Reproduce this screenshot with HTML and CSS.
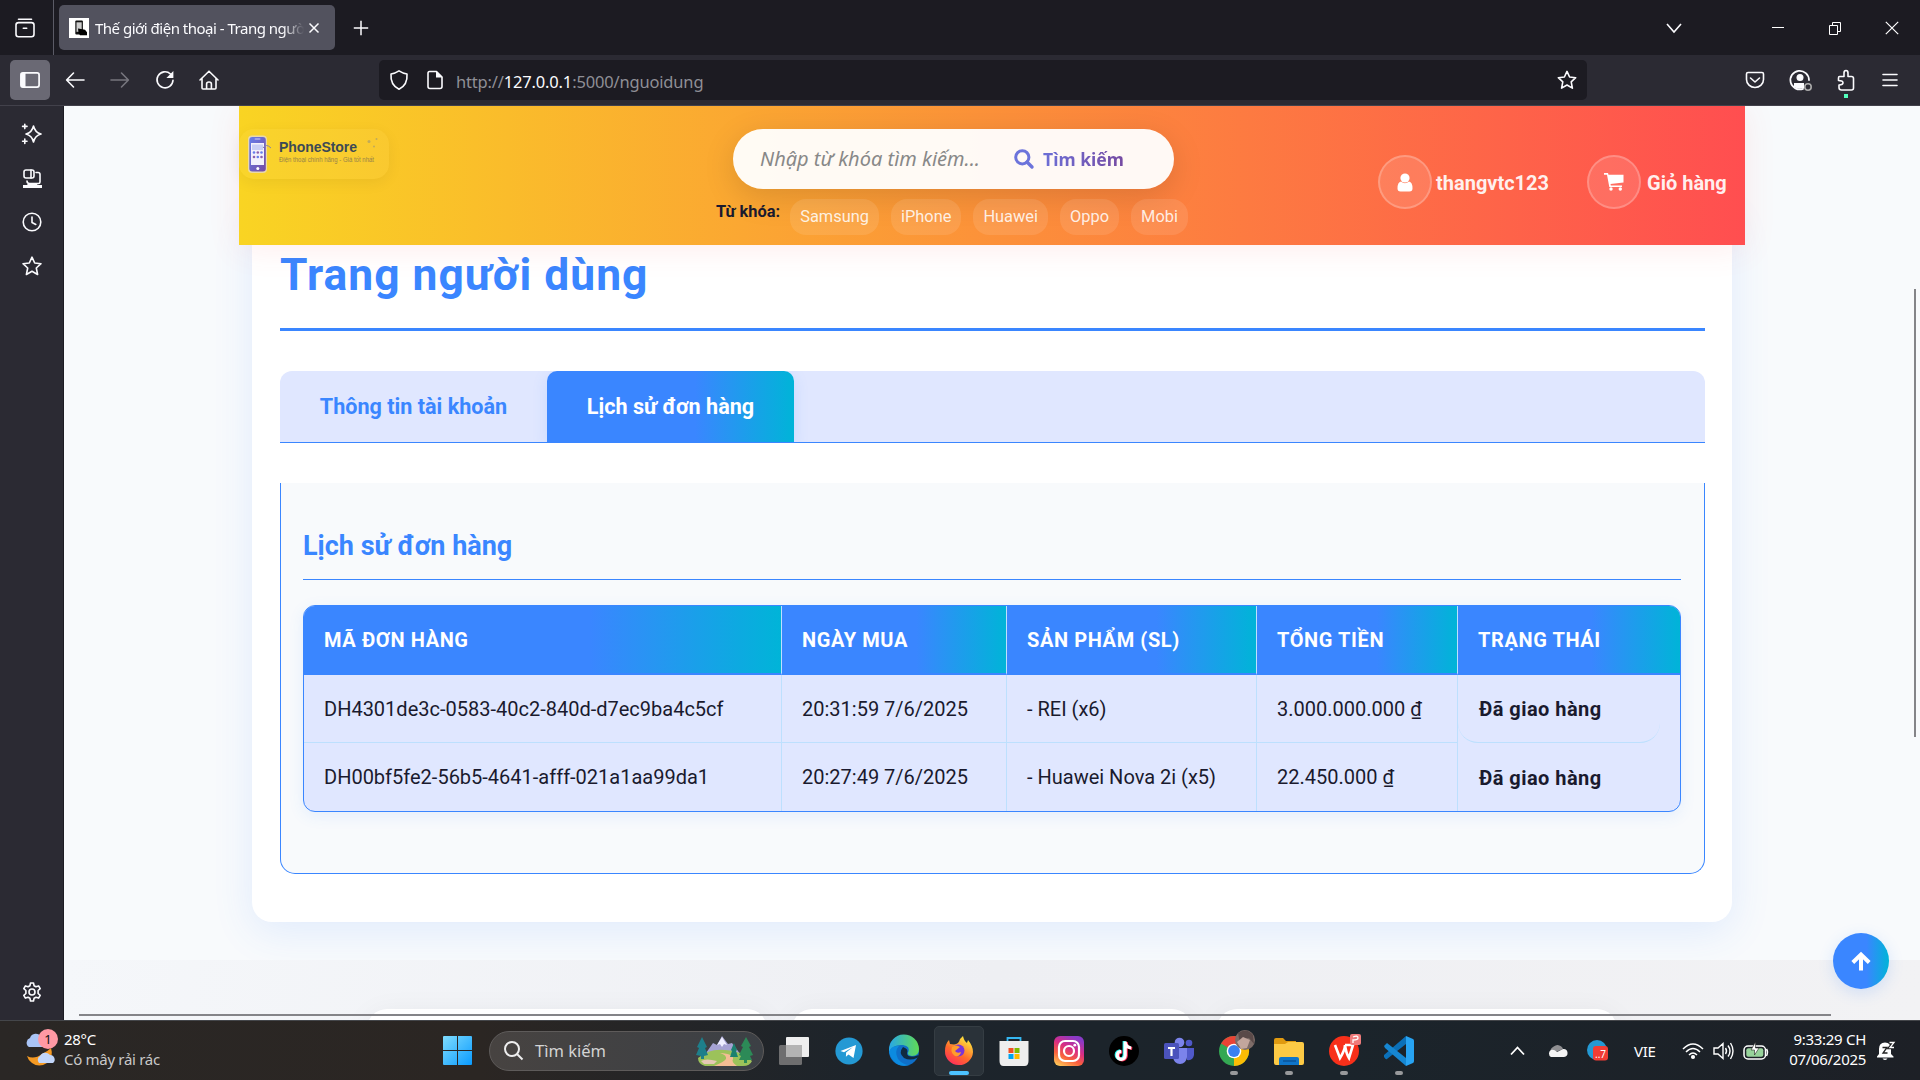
FILE: index.html
```html
<!DOCTYPE html>
<html lang="vi">
<head>
<meta charset="utf-8">
<title>Thế giới điện thoại - Trang người dùng</title>
<link rel="stylesheet" href="styles.css">
</head>
<body>
<div class="tabstrip">
  <svg class="ts-view" width="20" height="20" viewBox="0 0 20 20" fill="none" stroke="#fbfbfe" stroke-width="1.6" stroke-linecap="round"><path d="M3.5 1.2h13"/><rect x="1" y="4.6" width="18" height="14.2" rx="2.5"/><path d="M8.3 10.2h3.4"/></svg>
  <span class="ts-sep"></span>
  <div class="tab">
    <svg width="20" height="20" viewBox="0 0 20 20"><rect width="20" height="20" fill="#fff"/><rect x="6.3" y="2.6" width="7.6" height="14" rx="1" fill="#111"/><rect x="7.5" y="4.3" width="5.2" height="9.5" fill="#ccc"/><path d="M9 10.5l3 .6 4 .6 2 2.600v3h-7l-1.500-2.500z" fill="#000"/></svg>
    <span class="tab-title">Thế giới điện thoại - Trang người dùng</span>
    <svg class="tab-x" width="12" height="12" viewBox="0 0 12 12" stroke="#fbfbfe" stroke-width="1.5"><path d="M1.500 1.500l9 9M10.500 1.500l-9 9"/></svg>
  </div>
  <svg class="plus" width="16" height="16" viewBox="0 0 16 16" stroke="#fbfbfe" stroke-width="1.5"><path d="M8 .8v14.400M.8 8h14.400"/></svg>
  <svg class="win-chev" width="16" height="12" viewBox="0 0 16 12" fill="none" stroke="#fbfbfe" stroke-width="1.6"><path d="M1 2l7 8 7-8"/></svg>
  <svg class="win-min" width="12" height="12" viewBox="0 0 12 12" fill="#fff"><path d="M0 5h12v1H0z"/></svg>
  <svg class="win-max" width="14" height="14" viewBox="0 0 14 14" fill="none" stroke="#fff"><path d="M1.500 4.500h8v9h-8zM4.500 4.500v-3h8v9h-3"/></svg>
  <svg class="win-x" width="14" height="14" viewBox="0 0 14 14" stroke="#fff" stroke-width="1.2"><path d="M.8.8l12.400 12.400M13.200.8L.8 13.200"/></svg>
</div>
<div class="toolbar">
  <div class="side-btn"><svg width="20" height="16" viewBox="0 0 20 16"><rect x=".9" y=".9" width="18.200" height="14.200" rx="2" fill="none" stroke="#fbfbfe" stroke-width="1.700"/><path d="M1 1h4.500v14H1z" fill="#fbfbfe"/></svg></div>
  <svg class="nav back" width="20" height="20" viewBox="0 0 20 20"><path d="M19 10H2M8.500 3L1.600 10l6.900 7"/></svg>
  <svg class="nav fwd" width="20" height="20" viewBox="0 0 20 20"><path d="M1 10h17M11.500 3l6.900 7-6.900 7"/></svg>
  <svg class="nav" width="20" height="20" viewBox="0 0 20 20"><path d="M18 10.200A8 8 0 1 1 15.500 4"/><path d="M18.400 1v7h-7z" fill="#fbfbfe" stroke="none"/></svg>
  <svg class="nav home" width="20" height="20" viewBox="0 0 20 20"><path d="M1 10L10 1.200 19 10M3 8.500V18q0 1 1 1h12q1 0 1-1V8.500M7.600 19v-5q0-2 2.400-2t2.400 2v5"/></svg>
  <div class="urlbar">
    <svg class="nav" width="20" height="20" viewBox="0 0 20 20"><path d="M10 .9q4 2.600 8 3.100 .8 11-8 15.200Q1.200 15 2 4q4-.5 8-3.100z"/></svg>
    <svg class="nav doc" width="18" height="20" viewBox="0 0 18 20"><path d="M3.500 1.500h7L16 7v9.500q0 2-2 2H4q-2 0-2-2v-13q0-2 1.500-2z"/><path d="M10 1l6.500 6.500H10z" fill="#fbfbfe" stroke="none"/></svg>
    <span class="url">http://<b>127.0.0.1</b>:5000/nguoidung</span>
    <svg class="nav" width="20" height="20" viewBox="0 0 20 20"><path d="M10 1.400l2.600 5.600 6.100.7-4.500 4.200 1.200 6.200L10 15l-5.400 3.100 1.200-6.200L1.300 7.700 7.400 7z"/></svg>
  </div>
  <svg class="nav pocket" width="20" height="18" viewBox="0 0 20 18"><path d="M3 1.500h14q1.500 0 1.500 1.500v5.500a8.500 8 0 0 1-17 0V3q0-1.500 1.500-1.500zM5.500 7l4.500 4 4.500-4"/></svg>
  <svg class="nav acct" width="24" height="22" viewBox="0 0 24 22"><path d="M14 19.800A9.300 9.300 0 1 1 20 11" stroke-width="1.800"/><circle cx="11" cy="8.500" r="3.500" fill="#fbfbfe" stroke="none"/><path d="M5 14h10v5q-6 2-10-1z" fill="#fbfbfe" stroke="none"/><circle cx="19" cy="18" r="3.200" stroke="#aaa"/></svg>
  <svg class="nav ext" width="20" height="31" viewBox="0 0 20 31"><path d="M3.500 7.500H8V4q0-2.500 2-2.500T12 4v3.500h3.500q2 0 2 2V19q0 2-2 2h-10q-2.500 0-2.500-2.500V16q4 0 4-2.200T2.500 11.500V9q0-1.500 1-1.500z"/><path d="M8 25h4v4H8z" fill="#54ffbd" stroke="none"/></svg>
  <svg class="nav" width="16" height="14" viewBox="0 0 16 14"><path d="M1 1.500h14M1 7h14M1 12.500h14"/></svg>
</div>
<div class="middle">
  <div class="sidebar">
    <svg class="nav" width="20" height="20" viewBox="0 0 20 20"><path d="M11.500 2q1.500 6.500 7.500 8-6 1.500-7.500 8Q10 11.500 4 10q6-1.500 7.500-8zM2.800.2v4.400M.6 2.400H5M2.800 15v4.400M.6 17.200H5"/></svg>
    <svg class="nav" width="20" height="20" viewBox="0 -1 20 20"><rect x="2" y="1" width="10" height="8" rx="2"/><path d="M9 1v8M14 3.500h2q2 0 2 2V13q0 1.500-1.500 1.500h-9Q5 14.500 5 12"/><path d="M1 16h4l1.500-2h8l1 2H20v3H1z" fill="#fbfbfe" stroke="none"/></svg>
    <svg class="nav" width="20" height="20" viewBox="0 0 20 20"><circle cx="10" cy="10" r="8.800"/><path d="M10 5v5.500l3.800 2"/></svg>
    <svg class="nav" width="20" height="20" viewBox="0 0 20 20"><path d="M10 1.200l2.700 5.800 6.300.7-4.700 4.300 1.300 6.500L10 15.300l-5.600 3.200L5.700 12 1 7.700 7.300 7z"/></svg>
    <svg class="nav gear" width="20" height="20" viewBox="0 0 20 20"><circle cx="10" cy="10" r="3"/><path d="M8.500 1h3l.6 2.800 1.800 1 2.700-.9 1.600 2.700-2.100 1.900v3l2.100 1.900-1.600 2.700-2.700-.9-1.800 1-.6 2.800h-3l-.6-2.800-1.800-1-2.700.9-1.600-2.700 2.100-1.900v-3L1.800 6.600l1.600-2.700 2.700.9 1.800-1z"/></svg>
  </div>
  <div class="page">
    <header class="site-head">
      <svg class="logo" width="150" height="50" viewBox="0 0 150 50">
        <defs><linearGradient id="ph" x1="0" y1="0" x2="1" y2="1"><stop offset="0" stop-color="#667eea"/><stop offset="1" stop-color="#764ba2"/></linearGradient></defs>
        <rect x="9" y="6.500" width="19" height="37.500" rx="4" fill="#ead9a8"/><rect x="10.300" y="8" width="16.500" height="34.500" rx="3" fill="url(#ph)"/><rect x="12" y="14" width="13" height="22" fill="#f3f1fb"/><rect x="13" y="15.500" width="11" height="5.500" fill="#c9cff5"/><rect x="15.500" y="9" width="6" height="2" rx="1" fill="#9fa0e6"/>
        <g fill="#667eea"><circle cx="15" cy="23.500" r="1.300"/><circle cx="22.500" cy="23.500" r="1.300"/><circle cx="18.800" cy="28" r="1.300"/></g><g fill="#8f62ad"><circle cx="18.800" cy="23.500" r="1.300"/><circle cx="15" cy="28" r="1.300"/><circle cx="22.500" cy="28" r="1.300"/></g><circle cx="18.800" cy="39.500" r="1.500" fill="#fff"/>
        <path d="M24 19q3-5 8 0" fill="none" stroke="#8582a8"/><g fill="#9a9577" opacity=".6"><circle cx="130" cy="12.500" r="1.500"/><circle cx="137.500" cy="10" r="1"/><circle cx="135" cy="17.500" r="1"/></g>
        <text x="40" y="23.300" class="logo-name" textLength="78">PhoneStore</text><text x="40" y="33" class="logo-sub" textLength="95" lengthAdjust="spacingAndGlyphs">Điện thoại chính hãng - Giá tốt nhất</text>
      </svg>
      <div class="search-col">
        <div class="search">
          <span class="ph">Nhập từ khóa tìm kiếm...</span>
          <svg width="20" height="20" viewBox="0 0 20 20" fill="none" stroke="#6c74db" stroke-width="3"><circle cx="8.300" cy="8.300" r="6.600"/><path d="M13 13l5 5" stroke-width="3.400" stroke-linecap="round"/></svg>
          <span class="go">Tìm kiếm</span>
        </div>
        <div class="keys"><b>Từ khóa:</b><span>Samsung</span><span>iPhone</span><span>Huawei</span><span>Oppo</span><span>Mobi</span></div>
      </div>
      <div class="member">
        <i><svg width="16" height="19" viewBox="0 0 16 19" fill="#fff"><circle cx="8" cy="5" r="4.600"/><path d="M4 8.500Q8 12 12 8.500q3.500.5 3.500 7 0 3-3 3h-9q-3 0-3-3 0-6.500 3.500-7z"/></svg></i>
        <span class="m1">thangvtc123</span>
        <i><svg width="20" height="18" viewBox="0 0 20 18" fill="#fff"><path d="M0 0h4l.5 1.800h15V9.500L6.500 11l.4 1.500H18V14H5.300L3 1.700H0z"/><circle cx="7" cy="16" r="1.700"/><circle cx="16.300" cy="16" r="1.700"/></svg></i>
        <span class="m2">Giỏ hàng</span>
      </div>
    </header>
    <main class="card">
      <h1><span>Trang người dùng</span></h1>
      <div class="tabs"><div class="t1">Thông tin tài khoản</div><div class="t2">Lịch sử đơn hàng</div></div>
      <section class="panel">
        <h2>Lịch sử đơn hàng</h2>
        <div class="orders">
          <div class="row head"><div>MÃ ĐƠN HÀNG</div><div>NGÀY MUA</div><div>SẢN PHẨM (SL)</div><div>TỔNG TIỀN</div><div>TRẠNG THÁI</div></div>
          <div class="row r1"><div>DH4301de3c-0583-40c2-840d-d7ec9ba4c5cf</div><div>20:31:59 7/6/2025</div><div>- REI (x6)</div><div>3.000.000.000 ₫</div><div class="st">Đã giao hàng</div></div>
          <div class="row r2"><div>DH00bf5fe2-56b5-4641-afff-021a1aa99da1</div><div>20:27:49 7/6/2025</div><div>- Huawei Nova 2i (x5)</div><div>22.450.000 ₫</div><div class="st">Đã giao hàng</div></div>
        </div>
      </section>
    </main>
    <footer class="foot"><div></div><div></div><div></div></footer>
    <div class="vbar"></div><div class="hbar"></div>
    <div class="totop"><svg width="20" height="19" viewBox="0 0 20 19" fill="none" stroke="#fff" stroke-width="4"><path d="M10 18.500V3M1.800 10.500L10 2.500l8.200 8"/></svg></div>
  </div>
</div>
<div class="taskbar">
  <div class="weather">
    <svg width="36" height="38" viewBox="0 0 36 38"><path d="M5 17a5 5 0 0 1 1-9 6 6 0 0 1 11-1 5 5 0 0 1 3 10z" fill="#a9c4f5"/><path d="M3 26q7 4 15-2 6-3 9-6 3 9-4 15-8 5-15 0-4-3-5-7z" fill="#f59a23"/><path d="M15 33a4.500 4.500 0 0 1 1-7 6 6 0 0 1 10-1 4.500 4.500 0 0 1 3 8z" fill="#c2d6fa"/><circle cx="24" cy="9" r="10" fill="#ff99a4"/><text x="24" y="14" text-anchor="middle" class="badge">1</text></svg>
    <div class="wt"><span>28°C</span><span class="dim">Có mây rải rác</span></div>
  </div>
  <svg class="win" width="29" height="29" viewBox="0 0 29 29"><defs><linearGradient id="w" x1="0" y1="0" x2="1" y2="1" ><stop offset="0" stop-color="#7fdcfd"/><stop offset="1" stop-color="#0a9bff"/></linearGradient></defs><path d="M0 1q0-1 1-1h13v14H0zM15 0h13q1 0 1 1v13H15zM0 15h14v14H1q-1 0-1-1zM15 15h14v13q0 1-1 1H15z" fill="url(#w)"/></svg>
  <div class="tsearch">
    <svg width="20" height="20" viewBox="0 0 20 20" fill="none" stroke="#eee" stroke-width="2"><circle cx="8" cy="8" r="7"/><path d="M13 13l5.500 5.500"/></svg>
    <span>Tìm kiếm</span>
    <svg width="58" height="32" viewBox="0 0 58 32"><path d="M10 18L17 8l4 2 5-9 6 8 4-1 9 12z" fill="#a5a2d3"/><path d="M21 10l5-8 5 8-3-1-2 3-2-3z" fill="#eef"/><path d="M2 23q12-10 27-8 15 0 27 11-2 5-9 5H9q-7-2-7-8z" fill="#9cc25a"/><path d="M18 31q10-4 12-7 1-4-6-6 14 1 13 6-2 3 4 7z" fill="#f3bd94"/><path d="M6 2l5 10-2 1 3 7-4 1v3H5v-3l-5-1 3-7-2-1z" fill="#1e7f8b"/><path d="M50 2l5 9-2 1 4 8-3 1 2 4h-5v3h-3v-3h-5l2-4-2-1 4-8-2-1z" fill="#2c8a57"/><path d="M38 8l3 7-1 1 2 6h-8l2-6-1-1z" fill="#1c8070"/><path d="M5 26q5-3 16 0l-3 3H8z" fill="#e5c9b4"/></svg>
  </div>
  <div class="apps">
    <div class="app"><svg width="30" height="30" viewBox="0 0 30 30"><rect x="7" y="1" width="23" height="20" rx="1" fill="#eee"/><rect y="9" width="23" height="20" rx="1.500" fill="#777" opacity=".9"/><path d="M7 9h16v12H7z" fill="#b3b3b3"/></svg></div>
    <div class="app"><svg width="30" height="30" viewBox="0 0 30 30"><circle cx="15" cy="15" r="13.600" fill="#2499d4"/><path d="M6.500 15L22 9l-2.500 13-5-3.500-2.600 2.200.2-4.200L19 11l-9 5.200z" fill="#fff"/></svg></div>
    <div class="app"><svg width="30" height="30" viewBox="0 0 30 30"><defs><linearGradient id="e1"><stop stop-color="#28a7e8"/><stop offset="1" stop-color="#60db55"/></linearGradient></defs><circle cx="15" cy="15" r="15" fill="#0f6fc8"/><path d="M0 14A15 15 0 0 1 30 13q0 7-7 7-5-1-4-3 3-7-5-8Q4 8 0 16z" fill="url(#e1)"/><path d="M0 16Q2 9 10 10q-5 5-1 13 5 6 12 6Q5 33 0 16z" fill="#0c8be0"/><path d="M14 11q-5 6 1 11 6 3 13 0l2-1q0-3-3-1-9 2-9-3 2-4-4-6z" fill="#102a40"/></svg></div>
    <div class="app on"><svg width="30" height="30" viewBox="0 0 30 30"><defs><linearGradient id="f1" x1="0" y1="1" x2=".6" y2="0"><stop stop-color="#ff1a6a"/><stop offset=".5" stop-color="#ff6a2b"/><stop offset="1" stop-color="#ffe13c"/></linearGradient></defs><path d="M1 15Q1 8 5 4l1 4 4 .500Q15 8 16 3l3-3q1 5 4 7l1-3q5 6 5 12a14 13.500 0 0 1-28-1z" fill="url(#f1)"/><circle cx="14.500" cy="14.500" r="6" fill="#7a35d8"/><path d="M8 11q4-3 8 0l-5 4q2 3 6 1-1 5-6 4-5-3-3-9z" fill="#ff9d2b"/></svg></div>
    <div class="app"><svg width="30" height="30" viewBox="0 0 30 30"><path d="M8.500 7V2h13v5" fill="none" stroke="#35b7f1" stroke-width="1.800"/><path d="M.5 5h29v20q0 5-4 5h-21q-4 0-4-5z" fill="#eee"/><path d="M9.500 12h5v5h-5z" fill="#f25022"/><path d="M15.500 12h5v5h-5z" fill="#7fba00"/><path d="M9.500 18h5v5h-5z" fill="#00a4ef"/><path d="M15.500 18h5v5h-5z" fill="#ffb900"/></svg></div>
    <div class="app"><svg width="30" height="30" viewBox="0 0 30 30"><defs><linearGradient id="ig" x1=".1" y1="1" x2=".6" y2="0"><stop stop-color="#ffd15a"/><stop offset=".35" stop-color="#f9603c"/><stop offset=".65" stop-color="#d92d84"/><stop offset="1" stop-color="#8a3ac8"/></linearGradient></defs><rect width="30" height="30" rx="6" fill="url(#ig)"/><g fill="none" stroke="#fff" stroke-width="2.200"><rect x="5" y="5" width="20" height="20" rx="6"/><circle cx="15" cy="15" r="5"/></g><circle cx="20.800" cy="9.200" r="1.400" fill="#fff"/></svg></div>
    <div class="app"><svg width="30" height="30" viewBox="0 0 30 30"><circle cx="15" cy="15" r="15" fill="#000"/><g fill="none" stroke-width="3.200"><path d="M15.200 5v14a4 4 0 1 1-4-4.200M15.200 6q1 5 6 5.500" stroke="#25f4ee"/><path d="M17.200 6v14a4 4 0 1 1-4-4.200M17.200 7q1 5 6 5.500" stroke="#fe2c55"/><path d="M16.200 5.500v14a4 4 0 1 1-4-4.200M16.200 6.500q1 5 6 5.500" stroke="#fff"/></g></svg></div>
    <div class="app"><svg width="30" height="30" viewBox="0 0 30 30"><circle cx="15.500" cy="6.500" r="4.800" fill="#7b83eb"/><circle cx="25" cy="7" r="3.300" fill="#5059c9"/><path d="M20 12h10v7q-1 6-7 5z" fill="#5059c9"/><path d="M9 12h14v9q-1 7-7 7t-7-7z" fill="#7b83eb"/><rect y="7" width="15" height="16" rx="1.500" fill="#4b53bc"/><path d="M4 11h7v2H8.600v7H6.400v-7H4z" fill="#fff"/></svg></div>
    <div class="app run"><svg width="30" height="30" viewBox="0 0 30 30"><circle cx="15" cy="15" r="15" fill="#34a853"/><path d="M15 15L2 7.500A15 15 0 0 1 28 7.500z" fill="#ea4335"/><path d="M15 15l13-7.500A15 15 0 0 1 15 30z" fill="#fbbc05"/><circle cx="15" cy="15" r="7.300" fill="#fff"/><circle cx="15" cy="15" r="5.900" fill="#3a80f0"/><g transform="translate(0 -7)"><circle cx="26" cy="11" r="10" fill="#7d6c68"/><path d="M19 4q9-6 15 2l1 9-5-6-6 1-3 4z" fill="#5a4a49"/><path d="M18 13l6-5 7 3-3 8-6 1z" fill="#c2a69d"/></g></svg></div>
    <div class="app run"><svg width="30" height="30" viewBox="0 0 30 30"><path d="M0 4q0-2 2-2h7l3 3h10v6H0z" fill="#e09a10"/><path d="M0 8h11l3-2h14q2 0 2 2v19q0 2-2 2H2q-2 0-2-2z" fill="#fdca45"/><path d="M5 29v-6q0-2 2-2h16q2 0 2 2v6z" fill="#0f75c9"/><path d="M9 25h13" stroke="#0a4f91" stroke-width="1.300"/></svg></div>
    <div class="app run"><svg width="30" height="30" viewBox="0 3 30 30"><circle cx="15" cy="18" r="15" fill="#f8301a"/><path d="M6 12l5 13q5-8 5-13 1 8 4 13l4-13h-8" fill="none" stroke="#fff" stroke-width="2.600"/><rect x="21" y="1" width="11" height="11" rx="2" fill="#ef7b7b"/><path d="M24 4q5-2 5 1 0 2-5 2v3" fill="none" stroke="#fff" stroke-width="1.300"/></svg></div>
    <div class="app run"><svg width="30" height="30" viewBox="0 0 30 30"><path d="M22 0v8L3 23q-1 1-3-2v-2z" fill="#0b70b8"/><path d="M0 10l3-3 19 15v8L1 12z" fill="#1687d2"/><path d="M22 0l7 3q1 .5 1 2v20q0 1.500-1 2l-7 3z" fill="#27a3f2"/></svg></div>
  </div>
  <div class="tray">
    <svg class="up" width="15" height="10" viewBox="0 0 15 10" fill="none" stroke="#fff" stroke-width="1.800"><path d="M1 8.500l6.500-7 6.500 7"/></svg>
    <svg class="cloud" width="21" height="14" viewBox="0 0 21 14"><path d="M4 10a5 5 0 0 1 2-7 6 6 0 0 1 10 2z" fill="#8f8f92"/><path d="M4 13a4 4 0 0 1 0-7q3-1 6 2l6-3a4 4 0 0 1 1 8z" fill="#f4f4f4"/></svg>
    <svg class="tg" width="21" height="21" viewBox="0 0 21 21"><circle cx="10" cy="10" r="10" fill="#2499d4"/><rect x="6" y="6" width="15" height="14.500" rx="3" fill="#f23c34"/><text x="8" y="17.500" class="bn">..7</text></svg>
    <span class="vie">VIE</span>
    <svg class="wifi" width="22" height="16" viewBox="0 0 22 16" fill="none" stroke="#fff" stroke-width="1.500"><path d="M1 6q10-10 20 0M4 9q7-7 14 0M7 12q4-4 8 0"/><circle cx="11" cy="14" r="1.300" fill="#fff"/></svg>
    <svg class="vol" width="21" height="18" viewBox="0 0 21 18" fill="none" stroke="#fff" stroke-width="1.400"><path d="M1 6h4l5-4.500v15L5 12H1zM12.500 6q2 3 0 6M15 3.500q4 5.500 0 11M17.500 1q5 8 0 16"/></svg>
    <svg class="bat" width="26" height="18" viewBox="0 0 26 18"><rect x="1" y="4" width="21.500" height="13" rx="4" fill="none" stroke="#fff" stroke-width="1.500"/><rect x="3.300" y="6.300" width="17" height="8.500" rx="2" fill="#98d49b"/><path d="M23.500 7q2 3 0 7" stroke="#fff" stroke-width="1.500" fill="none"/><path d="M12.500 0L8 8h3.500v5L16 6h-3.500z" fill="#fff" stroke="#222" stroke-width=".6"/></svg>
    <div class="clock"><span>9:33:29 CH</span><span>07/06/2025</span></div>
    <svg class="bell" width="18" height="20" viewBox="0 0 18 20"><path d="M2 13V8q0-6.500 6-6.500T14 8v5l2.500 2.500v1H0v-1z" fill="#fff"/><path d="M5.500 17.500h5q-2.500 3-5 0z" fill="#fff"/><path d="M5.500 6.500H10L6 12h4.500" fill="none" stroke="#222" stroke-width="1.300"/><path d="M12 1.500h5l-4 5h4" fill="none" stroke="#1e1f22" stroke-width="3.500"/><path d="M12.500 1.500h4.500l-4 5h4" fill="none" stroke="#fff" stroke-width="1.300"/></svg>
  </div>
</div>
</body>
</html>
```
FILE: styles.css
```css
* { box-sizing: border-box; }
body { margin: 0; width: 1920px; height: 1080px; overflow: hidden; display: flex; flex-direction: column; font-family: Roboto, "Liberation Sans", sans-serif; color: #1a1a2e; }
svg { display: block; flex: none; overflow: visible; }
.nav { fill: none; stroke: #fbfbfe; stroke-width: 1.6; stroke-linejoin: round; stroke-linecap: round; }

.tabstrip { height: 55px; flex: none; background: #1c1b22; display: flex; align-items: center; }
.ts-view { margin-left: 15px; }
.ts-sep { width: 1px; height: 55px; margin-left: 18px; background: #5b5b66; }
.tab { width: 276px; height: 45px; margin-left: 5px; padding: 0 15px 0 10px; border-radius: 5px; background: #52525e; display: flex; align-items: center; }
.tab-title { width: 209px; margin-left: 6px; overflow: hidden; white-space: nowrap; font: 15px/24px "Noto Sans", sans-serif; letter-spacing: -.5px; color: #fbfbfe; -webkit-mask-image: linear-gradient(90deg, #000 90%, transparent); mask-image: linear-gradient(90deg, #000 90%, transparent); }
.tab-x { margin-left: 4px; }
.plus { margin-left: 18px; }
.win-chev { margin-left: auto; }
.win-min { margin-left: 90px; }
.win-max { margin-left: 44px; }
.win-x { margin: 0 21px 0 43px; }

.toolbar { height: 51px; flex: none; background: #2b2a33; border-bottom: 1px solid #42414b; display: flex; align-items: center; padding: 0 22px 0 10px; }
.side-btn { width: 40px; height: 40px; border-radius: 5px; background: #6a6974; display: grid; place-items: center; }
.back { margin-left: 15px; }
.fwd { margin: 0 25px; stroke: #77767e; }
.home { margin-left: 24px; }
.urlbar { width: 1208px; height: 40px; flex: none; margin-left: 160px; padding: 0 10px; border-radius: 5px; background: #1c1b22; display: flex; align-items: center; }
.doc { margin-left: 17px; }
.url { flex: 1; margin-left: 12px; padding-top: 3px; font: 16.500px/24px "Noto Sans", sans-serif; letter-spacing: -.17px; color: #8f8f96; }
.url b { font-weight: 400; color: #fbfbfe; }
.pocket { margin-left: 158px; }
.acct { margin-left: 24px; }
.ext { margin: 9px 26px 0 23px; }

.middle { height: 914px; flex: none; display: flex; }
.sidebar { width: 64px; flex: none; background: #2b2a33; border-right: 1px solid #1c1b22; padding: 18px 0 18px 22px; display: flex; flex-direction: column; gap: 24px; }
.gear { margin-top: auto; }

.page { position: relative; width: 1856px; height: 914px; overflow: hidden; background: #f8fafc; display: flex; flex-direction: column; }
.site-head { position: relative; z-index: 2; width: 1506px; height: 139px; flex: none; margin-left: 175px; background: linear-gradient(90deg, #f9d423, #ff4e50); box-shadow: 0 4px 30px rgba(255, 78, 80, .1); display: flex; padding-top: 23px; }
.logo { border-radius: 15px; background: rgba(255, 255, 255, .04); box-shadow: 0 4px 15px rgba(0, 0, 0, .06); }
.logo-name { font: bold 14px "Liberation Sans", sans-serif; fill: #3c4955; }
.logo-sub { font: 6.300px "Liberation Sans", sans-serif; fill: #96834a; }
.search-col { width: 500px; margin-left: 328px; }
.search { width: 441px; height: 60px; margin-left: 16px; padding-left: 27px; border-radius: 30px; background: rgba(255, 255, 255, .95); box-shadow: 0 8px 32px rgba(0, 0, 0, .13); display: flex; align-items: center; white-space: nowrap; }
.ph { width: 254px; font: italic 20px/30px "Noto Sans", sans-serif; color: #888; }
.go { margin-left: 9px; padding-bottom: 1px; font: bold 17.600px/28px "Noto Sans", sans-serif; background: linear-gradient(90deg, #6c6fd6, #764ba2); -webkit-background-clip: text; background-clip: text; color: transparent; }
.keys { display: flex; gap: 12px; margin: 10px 0 0 -1px; font-size: 16.400px; line-height: 36px; white-space: nowrap; }
.keys b { line-height: 25px; font-size: 16.400px; margin-right: -2px; }
.keys span { padding: 0 10px; border-radius: 16px; background: rgba(255, 255, 255, .1); color: rgba(255, 255, 255, .85); }
.member { display: flex; align-items: center; height: 54px; margin: 26px 0 0 161px; font-size: 20px; font-weight: 700; color: rgba(255, 255, 255, .92); white-space: nowrap; }
.member i { width: 54px; height: 54px; border-radius: 50%; border: 2px solid rgba(255, 255, 255, .22); background: rgba(255, 255, 255, .12); display: grid; place-items: center; }
.member span { padding-top: 1px; }
.member .m1 { width: 151px; margin-left: 4px; }
.member .m2 { margin-left: 6px; }

.card { width: 1480px; height: 716px; flex: none; margin: -39px 0 0 188px; padding: 39px 27px 0 28px; background: #fff; border-radius: 20px; box-shadow: 0 10px 40px rgba(58, 134, 255, .12); display: flex; flex-direction: column; }
h1 { margin: 0; height: 86px; flex: none; border-bottom: 3px solid #3a86ff; font-size: 44.400px; line-height: 60px; letter-spacing: 1px; color: #3a86ff; }
.tabs { height: 72px; flex: none; margin-top: 40px; border-bottom: 1px solid #3a86ff; border-radius: 12px 12px 0 0; background: #e0e7ff; display: flex; font-size: 21.600px; font-weight: 700; line-height: 72px; text-align: center; color: #3a86ff; white-space: nowrap; }
.t1 { width: 267px; }
.t2 { width: 247px; height: 71px; border-radius: 10px 10px 0 0; background: linear-gradient(90deg, #3a86ff 60%, #00b4d8); color: #fff; box-shadow: 0 4px 15px rgba(58, 134, 255, .15); clip-path: inset(0 -20px 0 -20px); }
.panel { height: 391px; flex: none; margin-top: 40px; padding: 40px 23px 0 22px; border: 1px solid #3a86ff; border-top: 0; border-radius: 0 0 15px 15px; background: #f8fafc; }
h2 { margin: 0; height: 57px; border-bottom: 1px solid #3a86ff; font-size: 27px; line-height: 46px; color: #3a86ff; }
.orders { height: 207px; margin-top: 25px; border: 1px solid #3a86ff; border-radius: 12px; overflow: hidden; background: #e0e7ff; box-shadow: 0 4px 15px rgba(58, 134, 255, .1); }
.row { display: grid; grid-template-columns: 478px 225px 250px 201px 1fr; font-size: 20px; white-space: nowrap; }
.row > div { padding-left: 20px; border-right: 1px solid #bde0fe; }
.row > div:last-child { border-right: 0; }
.head { grid-template-rows: 69px; height: 69px; line-height: 69px; font-weight: 700; letter-spacing: .6px; color: #fff; }
.head > div { background: linear-gradient(90deg, #3a86ff 60%, #00b4d8); border-bottom: 2px solid #3a86ff; }
.r1 { grid-template-rows: 68px; height: 68px; line-height: 69px; }
.r1 > div { border-bottom: 1px solid #bde0fe; }
.r1 > .st { margin-right: 20px; border-radius: 0 0 20px 20px; }
.r2 { height: 68px; line-height: 68px; }
.row > .st { padding-left: 21px; font-weight: 700; letter-spacing: .45px; }
.r2 > .st { line-height: 70px; }

.foot { height: 60px; flex: none; margin-top: 38px; padding: 49px 0 0 303px; background: linear-gradient(100deg, #f5f7fa 0%, #eeeff3 50%, #f2f2f4 100%); display: flex; gap: 25px; }
.foot div { width: 400px; height: 100px; border-radius: 20px; background: #fff; box-shadow: 0 5px 30px rgba(0, 0, 0, .06); }
.vbar { position: absolute; left: 1850px; top: 183px; width: 2px; height: 448px; background: #848488; }
.hbar { position: absolute; left: 15px; top: 908px; width: 1752px; height: 2px; background: #848488; }
.totop { position: absolute; left: 1769px; top: 827px; width: 56px; height: 56px; border-radius: 50%; background: linear-gradient(90deg, #3a86ff 60%, #00b4d8); box-shadow: 0 4px 15px rgba(58, 134, 255, .18); display: grid; place-items: center; }

.taskbar { height: 60px; flex: none; border-top: 1px solid #44464a; background: linear-gradient(90deg, #2a2725 0%, #2b2623 25%, #1d242b 45%, #1b242b 70%, #1d2026 100%); display: flex; align-items: center; color: #fff; font: 15px/20px "Noto Sans", sans-serif; white-space: nowrap; }
.weather { width: 443px; padding: 0 0 4px 24px; display: flex; align-items: center; }
.wt { margin-left: 4px; display: flex; flex-direction: column; letter-spacing: -.3px; }
.dim { color: #c9c9c9; }
.badge { font: 13px "Noto Sans", sans-serif; fill: #111; }
.tsearch { width: 275px; height: 40px; margin-left: 17px; padding: 0 9px 0 14px; border-radius: 20px; border: 1px solid #5e5b5a; background: linear-gradient(90deg, #474341, #3c4045); display: flex; align-items: center; font-size: 16.500px; color: #d4d4d4; }
.tsearch span { flex: 1; margin-left: 11px; }
.apps { display: flex; margin-left: 5px; }
.app { position: relative; width: 50px; height: 50px; margin-right: 5px; display: grid; place-items: center; }
.on { border-radius: 5px; background: #2a3239; border: 1px solid #353d43; }
.on::after, .run::after { content: ""; position: absolute; left: 21px; bottom: 1px; width: 8px; height: 4px; border-radius: 2px; background: #98999b; }
.on::after { left: 14px; bottom: 0; width: 20px; background: #4cc2ff; }
.tray { flex: 1; display: flex; align-items: center; }
.up { margin-left: 81px; }
.cloud { margin-left: 22px; }
.tg { margin-left: 19px; }
.bn { font: 10px "Noto Sans", sans-serif; fill: #fff; }
.vie { margin-left: 26px; letter-spacing: -.3px; }
.wifi { margin-left: 26px; }
.vol { margin-left: 9px; }
.bat { margin-left: 9px; }
.clock { margin-left: auto; padding-bottom: 4px; display: flex; flex-direction: column; text-align: right; letter-spacing: -.3px; }
.bell { margin: 0 25px 0 11px; }
```
